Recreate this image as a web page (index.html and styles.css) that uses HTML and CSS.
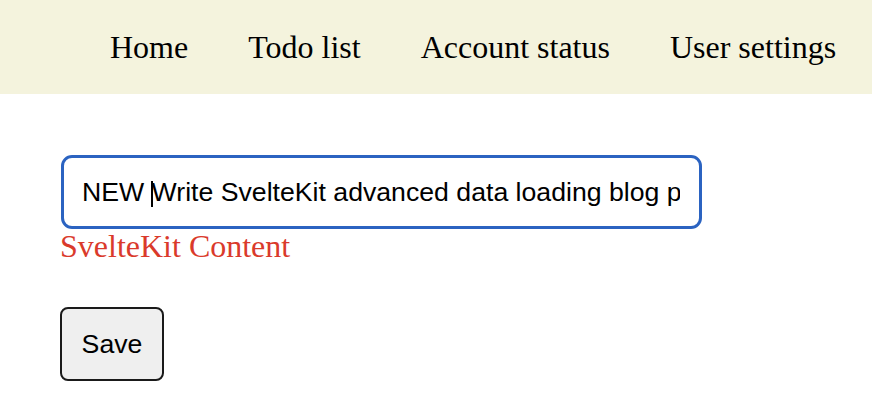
FILE: index.html
```html
<!DOCTYPE html>
<html lang="en">
<head>
<meta charset="utf-8">
<title>SvelteKit</title>
<link rel="stylesheet" href="styles.css">
</head>
<body>
<nav class="nav">
  <a class="nav-link" href="#">Home</a>
  <a class="nav-link" href="#">Todo list</a>
  <a class="nav-link" href="#">Account status</a>
  <a class="nav-link" href="#">User settings</a>
</nav>
<main class="main">
  <div class="field">
    <input class="text-input" type="text" value="NEW Write SvelteKit advanced data loading blog post">
    <span class="caret"></span>
  </div>
  <div class="label">SvelteKit Content</div>
  <button class="save-btn" type="button">Save</button>
</main>
</body>
</html>
```
FILE: styles.css
```css
html, body {
  margin: 0;
  padding: 0;
  background: #ffffff;
}
body {
  font-family: "Liberation Serif", "Times New Roman", serif;
}
.nav {
  height: 94px;
  background: #f4f3dd;
  display: flex;
  align-items: center;
  gap: 60px;
  padding-left: 110px;
  box-sizing: border-box;
}
.nav-link {
  font-size: 32px;
  color: #000;
  text-decoration: none;
  line-height: 1;
}
.main {
  padding-left: 61px;
  padding-top: 61px;
}
.field {
  position: relative;
  width: 641px;
}
.text-input {
  display: block;
  box-sizing: border-box;
  width: 641px;
  height: 74px;
  border: 3px solid #2b63c1;
  border-radius: 11px;
  padding: 0 19px 0 18px;
  font-family: "Liberation Sans", Arial, sans-serif;
  font-size: 26.67px;
  color: #000;
  background: #fff;
  outline: none;
}
.caret {
  position: absolute;
  left: 90px;
  top: 26px;
  width: 2px;
  height: 26px;
  background: #000;
}
.label {
  margin-left: -1px;
  font-size: 32px;
  color: #da3a2b;
  line-height: 35px;
}
.save-btn {
  display: block;
  margin-top: 43px;
  margin-left: -1px;
  box-sizing: border-box;
  width: 104px;
  height: 74px;
  border: 2px solid #1a1a1a;
  border-radius: 8px;
  background: #efefef;
  font-family: "Liberation Sans", Arial, sans-serif;
  font-size: 26.67px;
  color: #000;
  padding: 0;
}
```
